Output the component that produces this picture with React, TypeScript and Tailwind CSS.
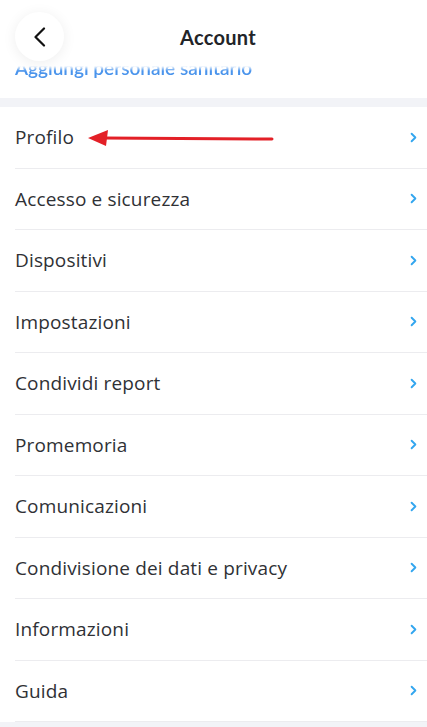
import { ChevronRight } from "lucide-react";

const items = [
  "Profilo",
  "Accesso e sicurezza",
  "Dispositivi",
  "Impostazioni",
  "Condividi report",
  "Promemoria",
  "Comunicazioni",
  "Condivisione dei dati e privacy",
  "Informazioni",
  "Guida",
];

export default function App() {
  return (
    <div className="h-[727px] w-[427px] overflow-hidden bg-[#f2f3f7] font-['Open_Sans','Lato',sans-serif] text-[#2b2d31]">
      <header className="relative h-[98px] bg-white">
        <div className="flex h-[66px] items-center justify-center pl-[9px] pt-[8px]">
          <h1 className="font-['Lato',sans-serif] text-[20px] font-bold tracking-[0.3px] text-[#222428]">Account</h1>
        </div>

        {/* scrolled content peeking out under the header */}
        <div className="relative h-[12px] overflow-hidden">
          <p className="-mt-[10px] pl-[15px] font-['Lato',sans-serif] text-[19px] font-semibold leading-[24px] text-[#4a94ec] blur-[0.7px]">
            Aggiungi personale sanitario
          </p>
          <div className="absolute inset-x-0 top-0 h-[5px] bg-gradient-to-b from-white to-transparent" />
        </div>

        <button className="absolute left-[15px] top-[12px] flex h-[49px] w-[49px] items-center justify-center rounded-full bg-white shadow-[0_2px_14px_rgba(0,0,0,0.07)]">
          <svg width="14" height="20" viewBox="0 0 14 20" fill="none">
            <path d="M11 1.5 2.5 10 11 18.5" stroke="#111" strokeWidth="2.2" strokeLinecap="round" strokeLinejoin="round" />
          </svg>
        </button>
      </header>

      <ul className="mt-[9px] bg-white">
        {items.map((label, index) => (
          <li key={label} className="relative pl-[15px]">
            <div className="flex h-[61.5px] items-center border-b border-[#ececef] pr-[6px]">
              <span className="flex-1 text-[19px] tracking-[0.15px] text-[#2f3135]">{label}</span>
              <ChevronRight size={15} strokeWidth={3} className="text-[#33a6ef]" />
            </div>
            {index === 0 && (
              <svg
                className="absolute left-[88px] top-[22px]"
                width="186"
                height="18"
                viewBox="0 0 186 18"
              >
                <line x1="16" y1="9" x2="184" y2="10" stroke="#e32027" strokeWidth="3" strokeLinecap="round" />
                <polygon points="0,9 20,1 18,17" fill="#e32027" />
              </svg>
            )}
          </li>
        ))}
      </ul>
    </div>
  );
}
